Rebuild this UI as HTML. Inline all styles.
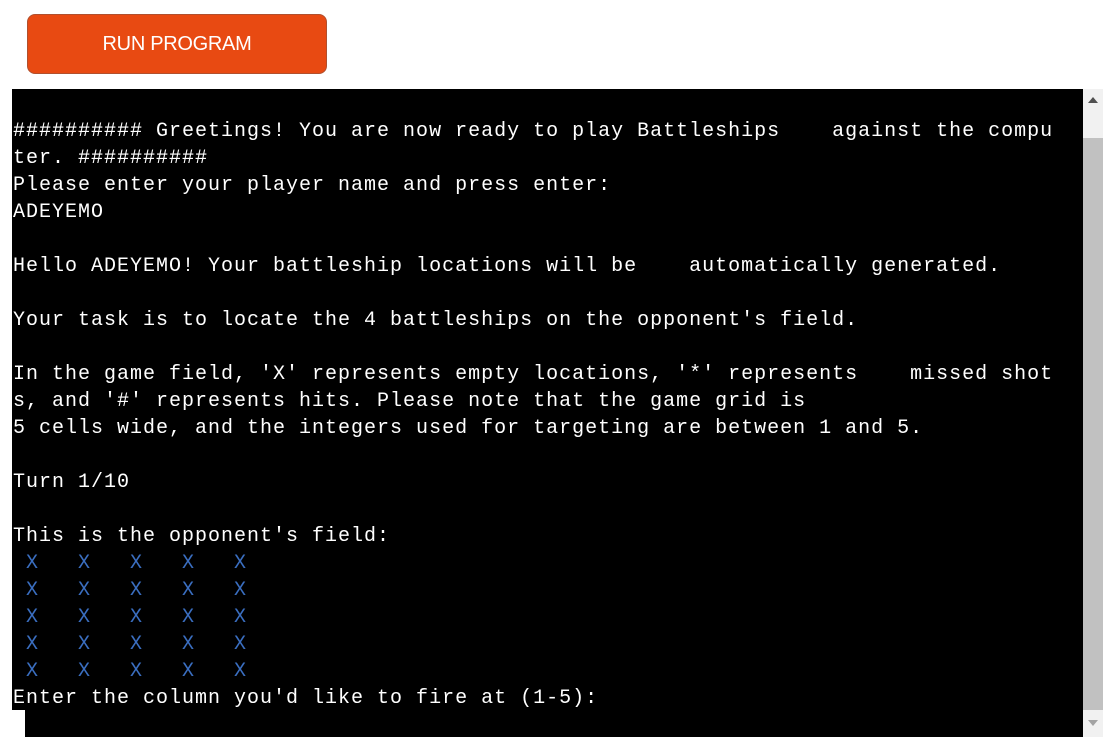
<!DOCTYPE html>
<html><head><meta charset="utf-8"><style>
body{margin:0;background:#fff;width:1103px;height:744px;overflow:hidden;position:relative}
.btn{position:absolute;left:27px;top:14px;width:298px;height:58px;background:#e84a12;border:1px solid #b0502e;border-radius:8px;color:#fff;font:20px "Liberation Sans",sans-serif;text-align:center;line-height:58px;letter-spacing:-0.3px}
.term{position:absolute;left:12px;top:89px;width:1071px;height:621px;background:#000}
.term2{position:absolute;left:25px;top:710px;width:1058px;height:27px;background:#000}
pre{position:absolute;left:13px;top:118px;margin:0;color:#fff;font:20px/27px "Liberation Mono",monospace;letter-spacing:1px}
.b{color:#3a6ec0}
.sb{position:absolute;left:1083px;top:89px;width:20px;height:648px;background:#f1f1f1}
.th{position:absolute;left:1083px;top:138px;width:20px;height:572px;background:#c1c1c1}
.up{position:absolute;left:1088px;top:97px;width:0;height:0;border-left:5px solid transparent;border-right:5px solid transparent;border-bottom:6px solid #505050}
.dn{position:absolute;left:1088px;top:720px;width:0;height:0;border-left:5px solid transparent;border-right:5px solid transparent;border-top:6px solid #a3a3a3}
</style></head><body>
<div class="btn">RUN PROGRAM</div>
<div class="term"></div><div class="term2"></div>
<div class="sb"></div><div class="th"></div><div class="up"></div><div class="dn"></div>
<pre>########## Greetings! You are now ready to play Battleships    against the compu
ter. ##########
Please enter your player name and press enter:
ADEYEMO

Hello ADEYEMO! Your battleship locations will be    automatically generated.

Your task is to locate the 4 battleships on the opponent's field.

In the game field, 'X' represents empty locations, '*' represents    missed shot
s, and '#' represents hits. Please note that the game grid is
5 cells wide, and the integers used for targeting are between 1 and 5.

Turn 1/10

This is the opponent's field:
<span class="b"> X   X   X   X   X</span>
<span class="b"> X   X   X   X   X</span>
<span class="b"> X   X   X   X   X</span>
<span class="b"> X   X   X   X   X</span>
<span class="b"> X   X   X   X   X</span>
Enter the column you'd like to fire at (1-5):</pre>
</body></html>
